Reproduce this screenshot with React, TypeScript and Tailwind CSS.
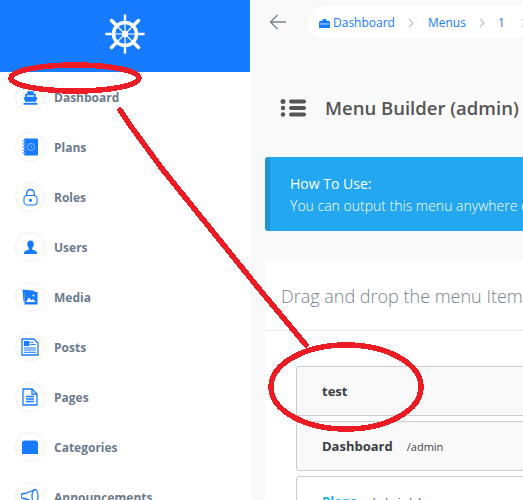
import React from 'react';

const BLUE = '#167bff';

const Boat = () => (
  <svg viewBox="0 0 16 16" className="w-[17px] h-[17px]" fill={BLUE}>
    <path d="M5 2h6v2.500h2v3l1.500.8L13 12H3L1.500 8.300 3 7.500v-3h2z" />
    <rect x="1.500" y="13" width="13" height="1.800" />
    <rect x="4.500" y="6" width="7" height="1.200" fill="#fff" />
  </svg>
);

const Plans = () => (
  <svg viewBox="0 0 16 18" className="w-4 h-[18px]" fill={BLUE}>
    <rect x="2" y="0.500" width="14" height="17" rx="1" />
    <circle cx="9" cy="9" r="3.600" fill="none" stroke="#9cc7ff" strokeWidth="0.800" />
    <path d="M9 6.800v2.200l1.300 1" fill="none" stroke="#9cc7ff" strokeWidth="0.700" />
    <path d="M0.500 3h3M0.500 6h3M0.500 9h3M0.500 12h3M0.500 15h3" stroke={BLUE} strokeWidth="1" />
    <path d="M2 3h1.500M2 6h1.500M2 9h1.500M2 12h1.500M2 15h1.500" stroke="#fff" strokeWidth="0.600" />
  </svg>
);

const Lock = () => (
  <svg viewBox="0 0 16 18" className="w-[15px] h-[18px]" fill="none" stroke={BLUE} strokeWidth="1.100">
    <path d="M4 8V5a4 4 0 0 1 8 0v3" strokeWidth="1.500" />
    <rect x="1" y="7.500" width="14" height="10" rx="3.500" />
    <circle cx="8" cy="12.500" r="1.100" fill={BLUE} />
  </svg>
);

const User = () => (
  <svg viewBox="0 0 16 16" className="w-[15px] h-[15px]" fill={BLUE}>
    <path d="M8 0.500c2.200 0 3.500 1.700 3.500 3.800 0 1.800-.8 3.300-1.700 4.200v1.300c0 .8 4.700 1.400 5.200 3.700v1.500H1V13.500c.5-2.300 5.200-2.900 5.200-3.700V8.500C5.300 7.600 4.500 6.100 4.500 4.300 4.500 2.200 5.800.5 8 .5z" />
  </svg>
);

const Media = () => (
  <svg viewBox="0 0 16 16" className="w-4 h-4" fill={BLUE}>
    <path d="M0.500 0.500l12 1.300v1.700L2.500 3.500v9H1.500z" />
    <rect x="2.500" y="3" width="13" height="12.500" rx="0.500" />
    <path d="M4 13l3-4.500 2.500 3 1.500-1.500 2.500 3z" fill="#fff" />
    <circle cx="11.500" cy="6.500" r="1" fill="#fff" />
  </svg>
);

const Posts = () => (
  <svg viewBox="0 0 18 18" className="w-[18px] h-[18px]" fill="none" stroke={BLUE} strokeWidth="1">
    <path d="M1 1h12l4 4v12H1z" strokeWidth="1.300" />
    <rect x="3.500" y="3.500" width="4.500" height="4" fill={BLUE} />
    <path d="M9.500 4.500h3M9.500 6.500h5M3 10h12M3 12h12M3 14.300h12" />
  </svg>
);

const Pages = () => (
  <svg viewBox="0 0 16 18" className="w-4 h-[18px]" fill="none" stroke={BLUE} strokeWidth="1.300">
    <path d="M1 1h9l5 5v11H1z" />
    <path d="M10 1v5h5M4 8.500h8M4 11h8M4 13.500h8" />
  </svg>
);

const Folder = () => (
  <svg viewBox="0 0 16 14" className="w-4 h-[14px]" fill={BLUE}>
    <path d="M0 3C0 2 1 0.500 2.500 0.500h11C15 .5 16 2 16 3v11H0z" />
  </svg>
);

const Megaphone = () => (
  <svg viewBox="0 0 18 18" className="w-[18px] h-[18px]" fill="none" stroke={BLUE} strokeWidth="1.300">
    <ellipse cx="14" cy="8" rx="3" ry="6.500" />
    <path d="M13 2L4 5.500H2.500a2.500 2.500 0 0 0 0 5H4L13 14" />
    <path d="M5 11l1 4h2l-1-3.500" />
  </svg>
);

const Helm = () => (
  <svg viewBox="0 0 40 40" className="w-10 h-10" fill="none" stroke="#fff">
    <circle cx="20" cy="20" r="11.500" strokeWidth="3.500" />
    <circle cx="20" cy="20" r="2.300" strokeWidth="1.800" />
    <path d="M20 0.500v39M0.500 20h39" strokeWidth="1.200" />
    <path d="M20 0.500v6M20 33.500v6M0.500 20h6M33.500 20h6" strokeWidth="2.400" />
    <path d="M6.500 6.500l27 27M33.500 6.500l-27 27" strokeWidth="1.200" />
    <path d="M6.500 6.500l3.800 3.800M33.500 33.500l-3.800-3.800M33.500 6.500l-3.800 3.800M6.500 33.500l3.800-3.800" strokeWidth="3.500" strokeLinecap="round" />
  </svg>
);

const NAV = [
  { label: 'Dashboard', icon: <Boat /> },
  { label: 'Plans', icon: <Plans /> },
  { label: 'Roles', icon: <Lock /> },
  { label: 'Users', icon: <User /> },
  { label: 'Media', icon: <Media /> },
  { label: 'Posts', icon: <Posts /> },
  { label: 'Pages', icon: <Pages /> },
  { label: 'Categories', icon: <Folder /> },
  { label: 'Announcements', icon: <Megaphone /> },
];

const Sep = () => (
  <svg viewBox="0 0 8 10" className="w-2 h-2.5 shrink-0" fill="none" stroke="#c4c8cc" strokeWidth="1.300">
    <path d="M2 1l4 4-4 4" />
  </svg>
);

export default function App() {
  return (
    <div className="relative flex w-[523px] h-[500px] overflow-hidden bg-[#f9f9f9] font-['Open_Sans',sans-serif]">
      <aside className="w-[250px] shrink-0 bg-white">
        <div className="h-[72px] bg-[#167bff] flex items-center justify-center pb-[5px]">
          <Helm />
        </div>
        <nav className="pl-[15px] pt-[10px] flex flex-col gap-5">
          {NAV.map(n => (
            <div key={n.label} className="flex items-center gap-[9px] h-[30px]">
              <span className="w-[30px] h-[30px] rounded-full border border-[#f1f1f1] flex items-center justify-center shrink-0">
                {n.icon}
              </span>
              <span className="mt-[2px] text-[12px] font-bold text-[#6b7a8c]">{n.label}</span>
            </div>
          ))}
        </nav>
      </aside>

      <main className="w-[640px] shrink-0 pl-[15px]">
        <div className="flex items-center h-[32px] mt-[6px]">
          <svg viewBox="0 0 18 16" className="w-[18px] h-4 ml-[4px] shrink-0" fill="none" stroke="#76838f" strokeWidth="1.300">
            <path d="M17 8H1.500M8.500 1l-7 7 7 7" />
          </svg>
          <div className="ml-[21px] h-[32px] flex items-center gap-[12px] bg-white rounded-full pl-[11px] pr-5 pt-[2px] text-[12px] text-[#167bff]">
            <span className="flex items-center gap-[3px]">
              <svg viewBox="0 0 12 12" className="w-[11px] h-[11px]" fill={BLUE}>
                <path d="M4 1h4v2h3l1 2v5a1 1 0 0 1-1 1H1a1 1 0 0 1-1-1V5l1-2h3z" />
                <path d="M1 6.500h10" stroke="#fff" strokeWidth="0.800" />
              </svg>
              Dashboard
            </span>
            <Sep />
            <span className="ml-[1px]">Menus</span>
            <Sep />
            <span className="mr-[3px]">1</span>
            <Sep />
            <span>Builder</span>
          </div>
        </div>

        <div className="flex items-center h-[36px] mt-[52px] pl-[15px]">
          <svg viewBox="0 0 26 18" className="w-[26px] h-[18px] shrink-0" fill="#555">
            <circle cx="3" cy="2.500" r="2.500" />
            <circle cx="3" cy="9" r="2.200" />
            <circle cx="3" cy="15.500" r="2.200" />
            <rect x="9" y="0.500" width="17" height="4" rx="2" />
            <rect x="9" y="7" width="17" height="4" rx="2" />
            <rect x="9" y="13.500" width="17" height="4" rx="2" />
          </svg>
          <h1 className="ml-[19px] text-[18.500px] leading-none font-semibold text-[#555] whitespace-nowrap">Menu Builder (admin)</h1>
        </div>

        <div className="mt-[31px] h-[74px] bg-[#22a7f0] border-l-[5px] border-[#1f95d8] rounded-[3px] pl-5 pt-[16px] text-[14px] font-light leading-[22px] text-white whitespace-nowrap">
          <div className="font-normal">How To Use:</div>
          <div>You can output this menu anywhere on your site by calling</div>
        </div>

        <section className="mt-[30px] bg-white rounded-[3px]">
          <div className="h-[70px] border-b border-[#e4eaec] pl-4 pt-[2px] flex items-center text-[18px] font-light text-[#76838f] whitespace-nowrap">
            Drag and drop the menu Items below to re-arrange them.
          </div>
          <div className="pl-[31px] pt-[35px] flex flex-col gap-[5px]">
            <div className="h-[50px] flex items-center pl-[25px] gap-[14px] border border-[#ccc] rounded-[3px] bg-[#f9f9f9]">
              <span className="mt-[2px] text-[13px] font-bold text-[#3a3f44]">test</span>
            </div>
            <div className="h-[50px] flex items-center pl-[25px] gap-[14px] border border-[#ccc] rounded-[3px] bg-[#f9f9f9]">
              <span className="mt-[2px] text-[13px] font-bold text-[#3a3f44]">Dashboard</span>
              <span className="mt-[2px] text-[11px] text-[#444]">/admin</span>
            </div>
            <div className="h-[50px] flex items-center pl-[25px] gap-[14px] border border-[#ccc] rounded-[3px] bg-white">
              <span className="mt-[2px] text-[13px] font-bold text-[#22a7f0]">Plans</span>
              <span className="mt-[2px] text-[11px] text-[#444]">/admin/plans</span>
            </div>
          </div>
        </section>
      </main>

      {/* red markup drawn over the screenshot */}
      <svg viewBox="0 0 523 500" className="absolute inset-0 w-[523px] h-[500px] pointer-events-none" fill="none" stroke="#ed1c24" shapeRendering="crispEdges" strokeWidth="5.500">
        <ellipse cx="75" cy="78" rx="64" ry="13" />
        <path d="M120 110L130 125L163 170L260 290L306 345" strokeLinecap="round" strokeLinejoin="round" />
        <ellipse cx="346" cy="387" rx="75" ry="42" />
      </svg>
    </div>
  );
}
